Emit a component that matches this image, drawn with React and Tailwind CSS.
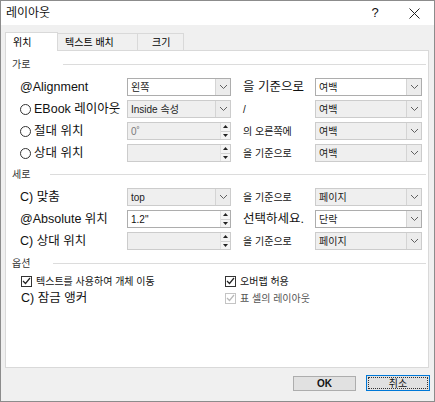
import React from 'react';

const FONT = "font-['Liberation_Sans','Noto_Sans_CJK_KR',sans-serif]";

const Chevron = () => (
  <svg width="9" height="6" viewBox="0 0 9 6">
    <path d="M1 1 L4.5 4.5 L8 1" fill="none" stroke="#606060" strokeWidth="1" />
  </svg>
);

const Combo = ({ value, disabled = false }) => (
  <div
    className={`h-[18px] flex border ${disabled ? 'border-[#cccccc] bg-[#efefef]' : 'border-[#adadad] bg-white'}`}
  >
    <div className="flex-1 flex items-center pl-[3px] text-[10px] text-[#222] truncate">{value}</div>
    <div className="w-[15px] flex items-center justify-center border-l border-[#d4d4d4] bg-[#ececec]">
      <Chevron />
    </div>
  </div>
);

const Spin = ({ value, disabled = false }) => (
  <div
    className={`h-[18px] flex border ${disabled ? 'border-[#cccccc] bg-[#efefef]' : 'border-[#adadad] bg-white'}`}
  >
    <div className={`flex-1 flex items-center pl-[3px] text-[10px] ${disabled ? 'text-[#7a7a7a]' : 'text-[#111]'}`}>{value}</div>
    <div className="w-[10px] flex flex-col border-l border-[#e0e0e0] bg-[#f4f4f4]">
      <div className="flex-1 flex items-center justify-center border-b border-[#d0d0d0]">
        <svg width="5" height="3" viewBox="0 0 5 3"><path d="M0 3 L2.5 0 L5 3 Z" fill="#222" /></svg>
      </div>
      <div className="flex-1 flex items-center justify-center">
        <svg width="5" height="3" viewBox="0 0 5 3"><path d="M0 0 L2.5 3 L5 0 Z" fill="#222" /></svg>
      </div>
    </div>
  </div>
);

const Radio = () => (
  <span className="inline-block w-[11px] h-[11px] rounded-full border border-[#333] bg-white mr-[3px]" />
);

const Check = ({ disabled = false }) => (
  <span
    className={`inline-flex items-center justify-center w-[11px] h-[11px] border mr-[4px] bg-white ${disabled ? 'border-[#c4c4c4]' : 'border-[#333]'}`}
  >
    <svg width="9" height="8" viewBox="0 0 9 8">
      <path d="M1 4 L3.5 6.5 L8 1" fill="none" stroke={disabled ? '#b8b8b8' : '#222'} strokeWidth="1.2" />
    </svg>
  </span>
);

const Header = ({ label, lineLeft }) => (
  <div className="h-[14px] flex items-center pr-[2px]">
    <span className="pl-[6px] text-[10px] text-[#333]" style={{ width: lineLeft }}>{label}</span>
    <div className="flex-1 h-px bg-[#dcdcdc]" />
  </div>
);

const Row = ({ label, control, mid, midBig = false, combo }) => (
  <div className="grid grid-cols-[107px_104px_84px_107px] h-[22px] items-start">
    <div className="h-[18px] flex items-center text-[12.5px] text-[#111] whitespace-nowrap">{label}</div>
    {control}
    <div className={`h-[18px] flex items-center pl-[12px] whitespace-nowrap text-[#111] ${midBig ? 'text-[12.5px]' : 'text-[10px]'}`}>{mid}</div>
    {combo}
  </div>
);

export default function App() {
  return (
    <div className={`w-[435px] h-[402px] border border-[#8c8c8c] bg-[#f0f0f0] flex flex-col ${FONT}`}>
      <div className="h-[24px] bg-white flex items-center pl-[5px] text-[12px] text-[#111]">
        <span className="flex-1">레이아웃</span>
        <span className="w-[14px] text-[13px] text-center">?</span>
        <span className="w-[40px] flex justify-center ml-[12px]">
          <svg width="11" height="11" viewBox="0 0 11 11">
            <path d="M0.5 0.5 L10.5 10.5 M10.5 0.5 L0.5 10.5" stroke="#222" strokeWidth="1" />
          </svg>
        </span>
      </div>

      <div className="px-[4px] pt-[7px]">
        <div className="flex items-end h-[18px]">
          <div className="relative z-10 -mb-px h-[19px] w-[53px] bg-white border border-b-0 border-[#d9d9d9] text-[10px] pl-[7px] flex items-center">위치</div>
          <div className="h-[17px] w-[80px] border border-b-0 border-l-0 border-[#d9d9d9] text-[10px] pl-[7px] flex items-center">텍스트 배치</div>
          <div className="h-[17px] w-[46px] border border-b-0 border-l-0 border-[#d9d9d9] text-[10px] pl-[14px] flex items-center">크기</div>
        </div>

        <div className="h-[318px] w-[424px] bg-white border border-[#d9d9d9] pt-[6px]">
          <Header label="가로" lineLeft={57} />
          <div className="mt-[7px] pl-[14px]">
            <Row label="@Alignment" control={<Combo value="왼쪽" />} mid="을 기준으로" midBig combo={<Combo value="여백" />} />
            <Row label={<><Radio />EBook 레이아웃</>} control={<Combo value="Inside 속성" disabled />} mid="/" combo={<Combo value="여백" disabled />} />
            <Row label={<><Radio />절대 위치</>} control={<Spin value="0˚" disabled />} mid="의 오른쪽에" combo={<Combo value="여백" disabled />} />
            <Row label={<><Radio />상대 위치</>} control={<Spin value="" disabled />} mid="을 기준으로" combo={<Combo value="여백" disabled />} />
          </div>

          <div className="mt-[1px]">
            <Header label="세로" lineLeft={44} />
          </div>
          <div className="mt-[7px] pl-[14px]">
            <Row label="C) 맞춤" control={<Combo value="top" disabled />} mid="을 기준으로" combo={<Combo value="페이지" disabled />} />
            <Row label="@Absolute 위치" control={<Spin value={'1.2"'} />} mid="선택하세요." midBig combo={<Combo value="단락" />} />
            <Row label="C) 상대 위치" control={<Spin value="" disabled />} mid="을 기준으로" combo={<Combo value="페이지" disabled />} />
          </div>

          <div className="mt-[2px]">
            <Header label="옵션" lineLeft={47} />
          </div>
          <div className="mt-[4px] pl-[15px] grid grid-cols-[204px_1fr] gap-y-[3px]">
            <div className="h-[14px] flex items-center text-[10px] text-[#111]"><Check />텍스트를 사용하여 개체 이동</div>
            <div className="h-[14px] flex items-center text-[10px] text-[#111]"><Check />오버랩 허용</div>
            <div className="h-[14px] flex items-center text-[12.5px] text-[#111]">C) 잠금 앵커</div>
            <div className="h-[14px] flex items-center text-[10px] text-[#555]"><Check disabled />표 셀의 레이아웃</div>
          </div>
        </div>

        <div className="flex justify-end gap-[10px] mt-[8px]">
          <div className="h-[15px] w-[63px] bg-[#e1e1e1] border border-[#adadad] flex items-center justify-center text-[10px] font-bold text-[#111]">OK</div>
          <div className="h-[16px] w-[64px] bg-[#e1e1e1] border border-[#0078d7] p-[1px] -mt-px">
            <div className="h-full border border-dotted border-[#333] flex items-center justify-center text-[10px] text-[#111]">취소</div>
          </div>
        </div>
      </div>
    </div>
  );
}
